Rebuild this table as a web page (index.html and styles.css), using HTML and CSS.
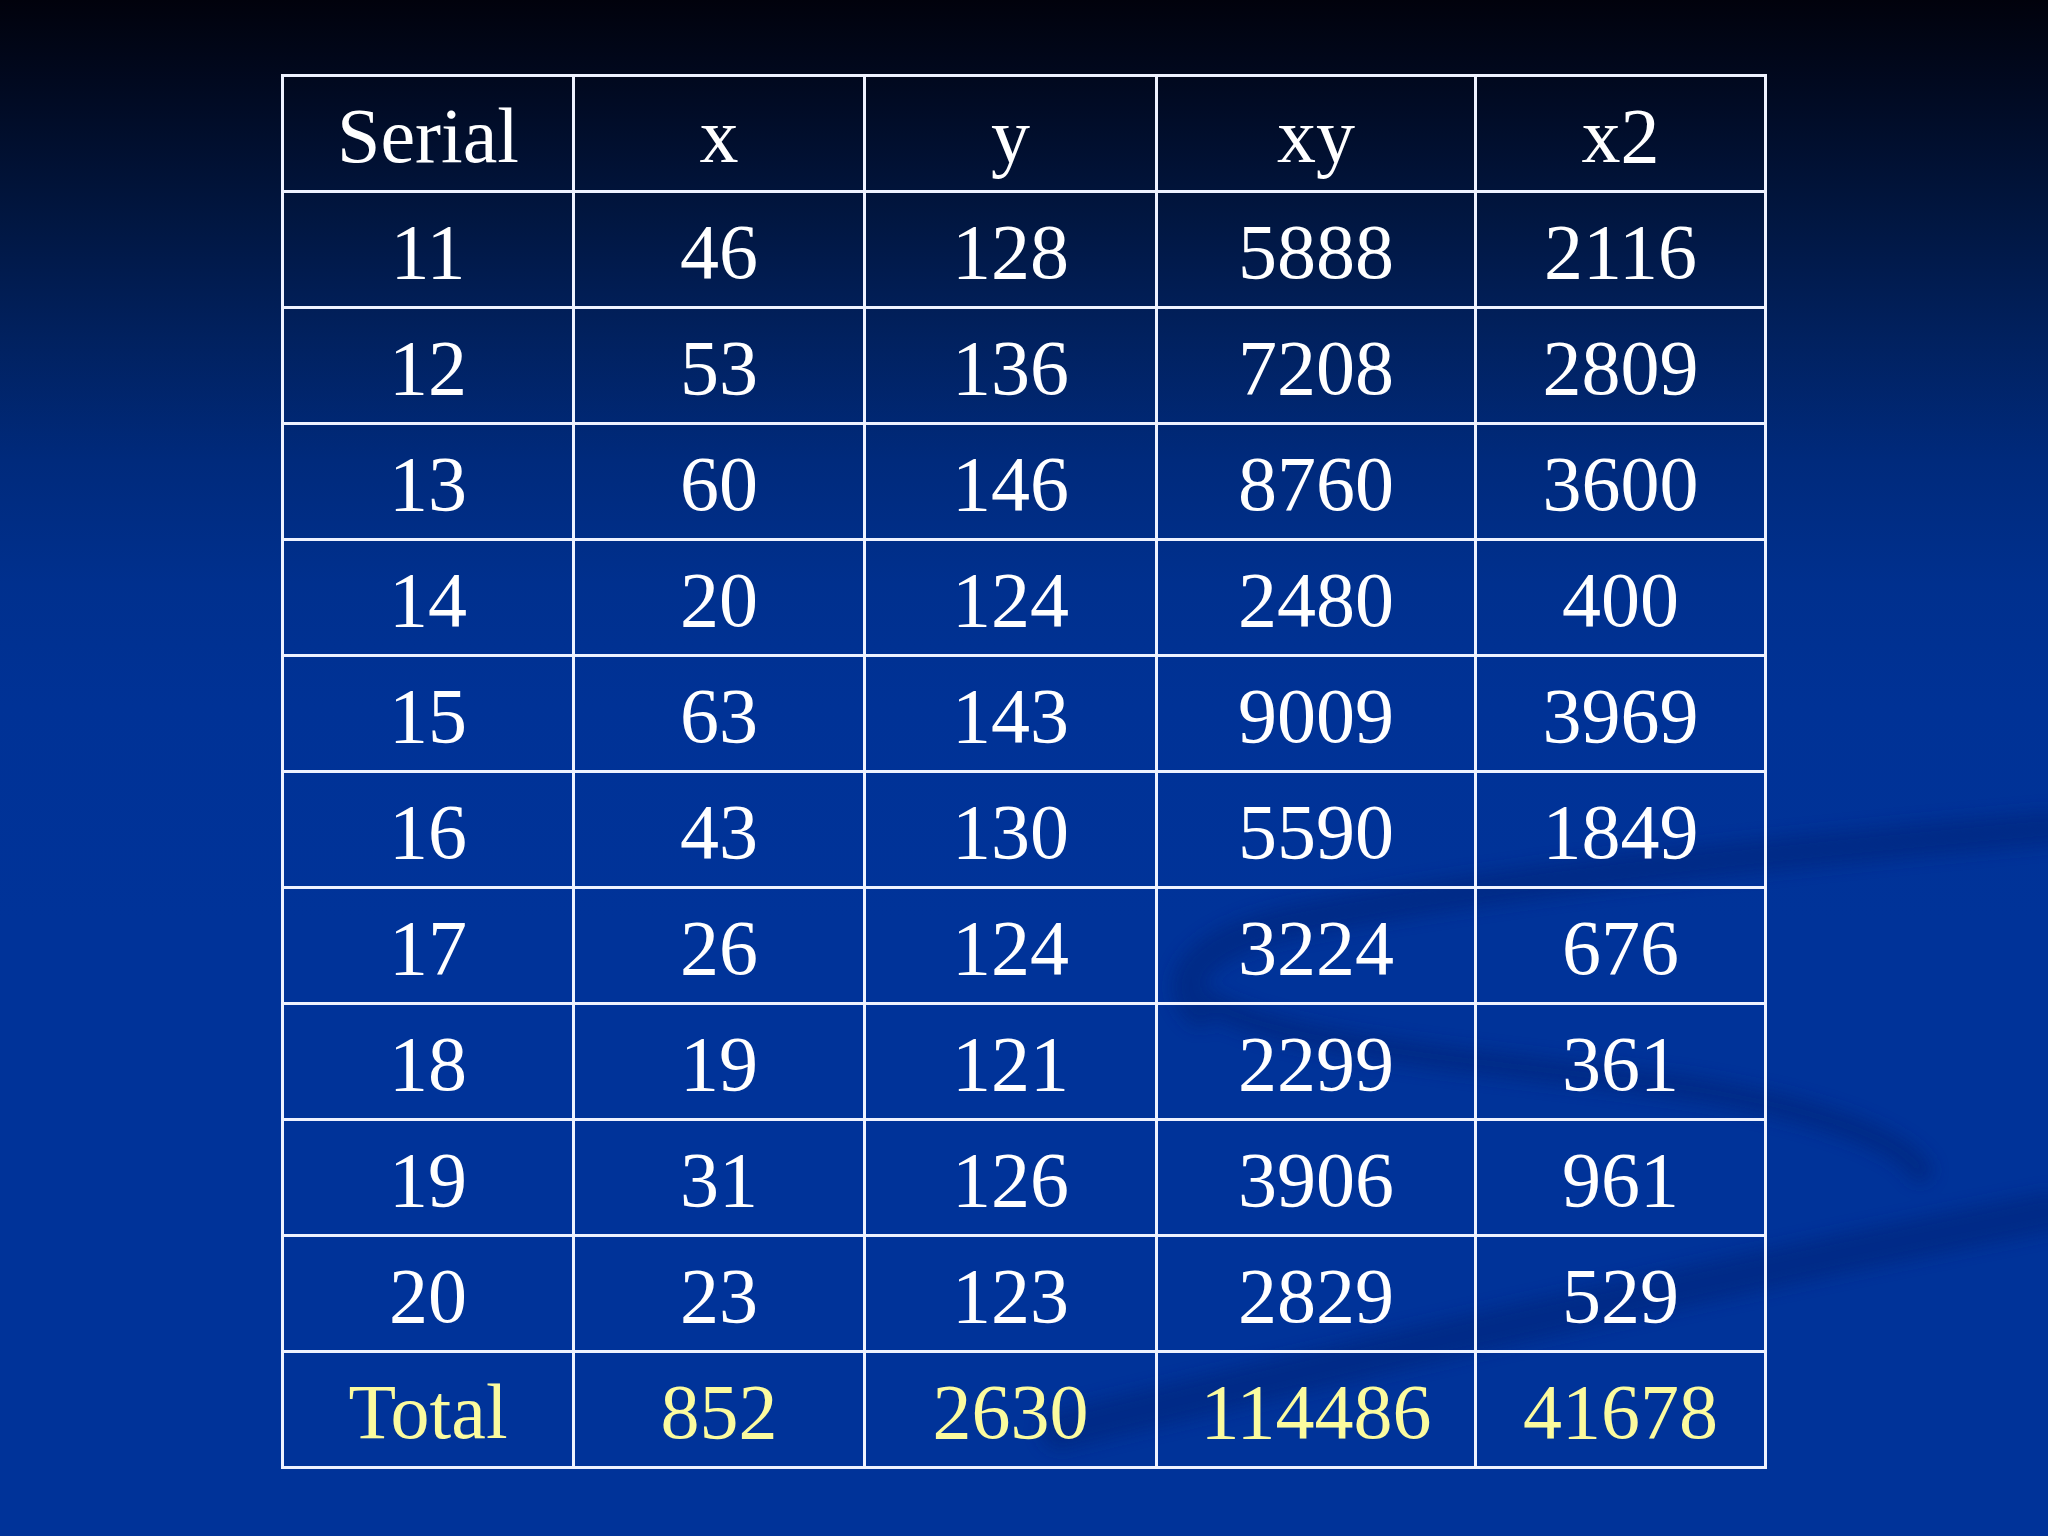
FILE: index.html
```html
<!DOCTYPE html>
<html>
<head>
<meta charset="utf-8">
<link rel="stylesheet" href="styles.css">
</head>
<body>
<div class="slide">
  <svg class="swoosh" viewBox="0 0 2048 1536" width="2048" height="1536" aria-hidden="true">
    <defs>
      <filter id="soft" x="-10%" y="-10%" width="120%" height="120%">
        <feGaussianBlur stdDeviation="8"/>
      </filter>
    </defs>
    <g filter="url(#soft)" fill="none" stroke="#00287f" stroke-linecap="round" opacity="0.65">
      <path d="M2048 828 C1800 850 1500 880 1300 920 C1200 940 1170 980 1200 1010" stroke-width="34"/>
      <path d="M1190 990 C1260 1050 1500 1060 1700 1090 C1820 1110 1900 1140 1920 1170" stroke-width="26"/>
      <path d="M2048 1212 C1700 1280 1350 1360 1060 1430" stroke-width="40"/>
    </g>
  </svg>
  <table class="data">
    <colgroup>
      <col class="c1"><col class="c2"><col class="c3"><col class="c4"><col class="c5">
    </colgroup>
    <tr><td>Serial</td><td>x</td><td>y</td><td>xy</td><td>x2</td></tr>
    <tr><td>11</td><td>46</td><td>128</td><td>5888</td><td>2116</td></tr>
    <tr><td>12</td><td>53</td><td>136</td><td>7208</td><td>2809</td></tr>
    <tr><td>13</td><td>60</td><td>146</td><td>8760</td><td>3600</td></tr>
    <tr><td>14</td><td>20</td><td>124</td><td>2480</td><td>400</td></tr>
    <tr><td>15</td><td>63</td><td>143</td><td>9009</td><td>3969</td></tr>
    <tr><td>16</td><td>43</td><td>130</td><td>5590</td><td>1849</td></tr>
    <tr><td>17</td><td>26</td><td>124</td><td>3224</td><td>676</td></tr>
    <tr><td>18</td><td>19</td><td>121</td><td>2299</td><td>361</td></tr>
    <tr><td>19</td><td>31</td><td>126</td><td>3906</td><td>961</td></tr>
    <tr><td>20</td><td>23</td><td>123</td><td>2829</td><td>529</td></tr>
    <tr class="total"><td>Total</td><td>852</td><td>2630</td><td>114486</td><td>41678</td></tr>
  </table>
</div>
</body>
</html>
```

FILE: styles.css
```css
html, body {
  margin: 0;
  padding: 0;
}
body {
  width: 2048px;
  height: 1536px;
  overflow: hidden;
  background: linear-gradient(to bottom,
    #01020c 0%,
    #010a22 6%,
    #011640 14%,
    #01215f 22%,
    #002a7c 30%,
    #00308e 38%,
    #003296 46%,
    #003399 60%,
    #003399 100%);
}
.slide {
  position: relative;
  width: 2048px;
  height: 1536px;
  box-sizing: border-box;
  padding: 74px 0 0 281px;
}
.swoosh {
  position: absolute;
  left: 0;
  top: 0;
}
.data {
  position: relative;
  border-collapse: collapse;
  table-layout: fixed;
  width: 1483px;
  font-family: "Liberation Serif", "Times New Roman", serif;
  font-size: 78px;
  color: #ffffff;
}
.c1 { width: 291px; }
.c2 { width: 291px; }
.c3 { width: 292px; }
.c4 { width: 319px; }
.c5 { width: 290px; }
.data td {
  border: 3px solid #eef2ff;
  height: 116px;
  padding: 4px 0 0 0;
  box-sizing: border-box;
  text-align: center;
  vertical-align: middle;
  line-height: 1;
  white-space: nowrap;
}
.total td {
  color: #fbfb9e;
}
```
